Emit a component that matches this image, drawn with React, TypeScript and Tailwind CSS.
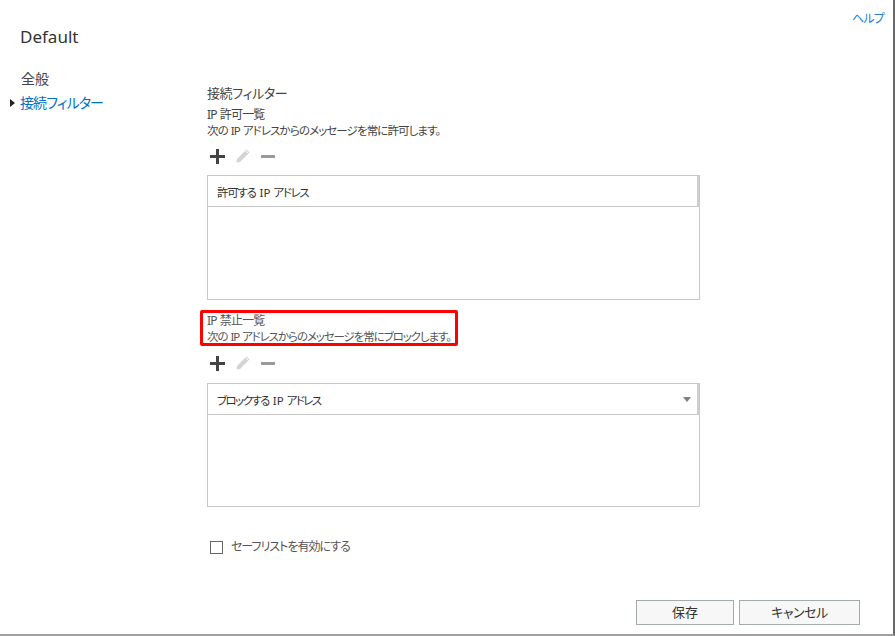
import React from "react";

const jp = { fontFamily: '"Noto Sans", "Noto Sans CJK JP", sans-serif' };

function IP({ wide }: { wide?: boolean }) {
  return <span className={wide ? "ml-[4px] mr-[3px] tracking-[0px]" : "mx-[3px]"}>IP</span>;
}

function Toolbar() {
  return (
    <div className="flex items-center h-[16px] gap-[10px] pl-[3px]">
      <svg width="15" height="15" viewBox="0 0 15 15">
        <rect x="6" y="0" width="3" height="15" fill="#444" />
        <rect x="0" y="6" width="15" height="3" fill="#444" />
      </svg>
      <svg width="16" height="16" viewBox="0 0 16 16">
        <path d="M11.5 1.5 L14.5 4.5 L5 14 L1.5 14.5 L2 11 Z" fill="#d4d4d4" />
        <path d="M10.5 2.5 L13.5 5.5" stroke="#fff" strokeWidth="1" />
      </svg>
      <svg width="14" height="15" viewBox="0 0 14 15">
        <rect x="0" y="6" width="14" height="3" fill="#9a9a9a" />
      </svg>
    </div>
  );
}

function ListBox({ children, dropdown, height, tight }: { children: React.ReactNode; dropdown?: boolean; height: string; tight?: boolean }) {
  return (
    <div className={`w-[493px] ${height} border border-[#c8c8c8] flex flex-col`}>
      <div className="h-[31px] flex items-center pt-[4px] border-b border-[#c8c8c8] relative">
        <span className={`pl-[9px] text-[11.5px] text-[#333] [font-feature-settings:'palt'] whitespace-nowrap ${tight ? "tracking-[-1.6px]" : "tracking-[-1.3px]"}`}>{children}</span>
        {dropdown && (
          <svg className="absolute right-[8px] top-[13px]" width="8" height="6" viewBox="0 0 8 6">
            <path d="M0 0 L8 0 L4 5 Z" fill="#8a7a88" />
          </svg>
        )}
        <div className="absolute right-0 top-0 bottom-0 w-[2px] bg-[#cfcfcf]" />
      </div>
      <div className="flex-1" />
    </div>
  );
}

export default function App() {
  return (
    <div
      className="w-[895px] h-[636px] bg-white relative border-r-2 border-r-[#6a6a6a] border-b-2 border-b-[#a0a0a0] flex flex-col overflow-hidden"
      style={jp}
    >
      <div className="absolute right-[9px] top-[10px] text-[12px] text-[#2b7cd3] [font-feature-settings:'palt'] tracking-[-0.8px]">ヘルプ</div>
      <div className="pl-[20px] pt-[25px] text-[17px] leading-[24px] text-[#333]">Default</div>
      <div className="flex">
        <div className="w-[207px] pt-[20px] flex flex-col">
          <div className="pl-[21px] text-[14px] leading-[20px] text-[#444] [font-feature-settings:'palt']">全般</div>
          <div className="flex items-center mt-[4px] h-[20px]">
            <svg className="ml-[10px] mr-[5px]" width="5" height="8" viewBox="0 0 5 8">
              <path d="M0 0 L5 4 L0 8 Z" fill="#222" />
            </svg>
            <span className="text-[14px] leading-[20px] text-[#0072c6] [font-feature-settings:'palt'] tracking-[-0.9px]">接続フィルター</span>
          </div>
        </div>
        <div className="flex-1 pt-[35px] flex flex-col">
          <div className="text-[13px] leading-[18px] text-[#444] [font-feature-settings:'palt'] tracking-[-0.4px]">接続フィルター</div>
          <div className="mt-[5px] text-[12px] leading-[16px] text-[#444] [font-feature-settings:'palt'] tracking-[-0.8px] whitespace-nowrap">IP<span className="ml-[3px]">許可一覧</span></div>
          <div className="text-[11.5px] leading-[16px] text-[#444] [font-feature-settings:'palt'] tracking-[-0.9px] whitespace-nowrap">次の<IP />アドレスからのメッセージを常に許可します。</div>
          <div className="mt-[9px]">
            <Toolbar />
          </div>
          <div className="mt-[11px]">
            <ListBox height="h-[125px]">許可する<IP wide />アドレス</ListBox>
          </div>
          <div className="relative mt-[13px] w-[250px]">
            <div className="absolute -left-[7px] -top-[3px] w-[258px] h-[36px] border-[3px] border-[#ff0000] rounded-[2px]" />
            <div className="text-[12px] leading-[16px] text-[#555] [font-feature-settings:'palt'] tracking-[-0.8px] whitespace-nowrap">IP<span className="ml-[3px]">禁止一覧</span></div>
            <div className="text-[11.5px] leading-[16px] text-[#555] [font-feature-settings:'palt'] tracking-[-1.1px] whitespace-nowrap">次の<IP />アドレスからのメッセージを常にブロックします。</div>
          </div>
          <div className="mt-[10px]">
            <Toolbar />
          </div>
          <div className="mt-[12px]">
            <ListBox dropdown tight height="h-[124px]">ブロックする<IP wide />アドレス</ListBox>
          </div>
          <div className="mt-[31px] flex items-center pl-[3px]">
            <div className="w-[13px] h-[13px] border border-[#666] bg-white" />
            <span className="ml-[8px] text-[12px] text-[#555] [font-feature-settings:'palt'] tracking-[-1px]">セーフリストを有効にする</span>
          </div>
        </div>
      </div>
      <div className="absolute right-[33px] bottom-[9px] flex gap-[5px]">
        <button className="w-[98px] h-[25px] bg-[#f7f7f7] border border-[#a3acab] text-[13px] text-[#333] [font-feature-settings:'palt']">保存</button>
        <button className="w-[121px] h-[25px] bg-[#f7f7f7] border border-[#a3acab] text-[13px] text-[#333] [font-feature-settings:'palt'] tracking-[-0.5px]">キャンセル</button>
      </div>
    </div>
  );
}
